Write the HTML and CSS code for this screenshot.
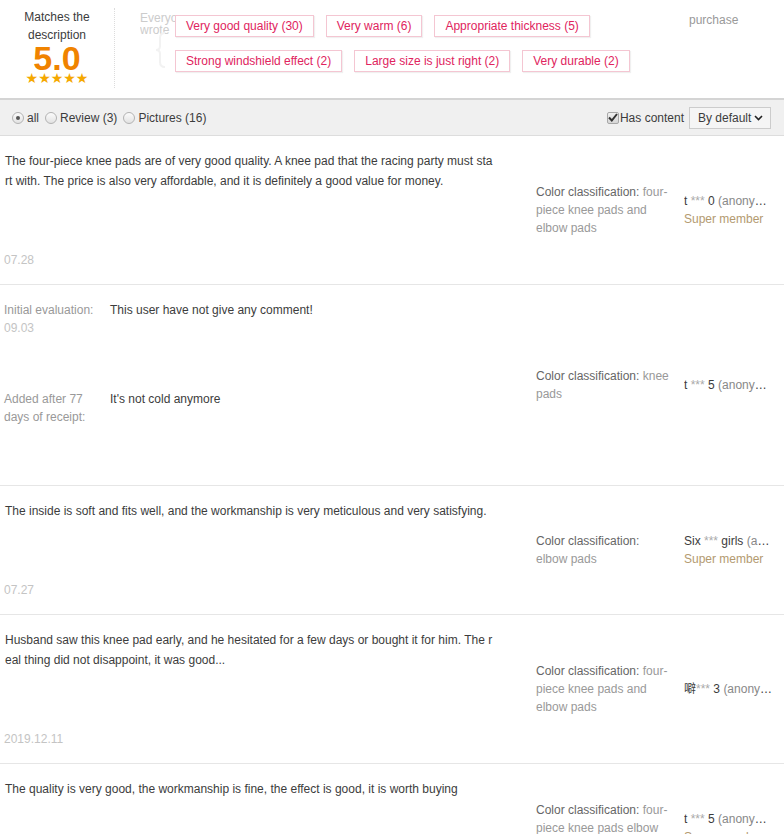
FILE: index.html
```html
<!DOCTYPE html>
<html lang="en">
<head>
<meta charset="utf-8">
<title>Reviews</title>
<link rel="stylesheet" href="styles.css">
</head>
<body>
<div class="summary">
  <div class="score">
    <div class="score-label">Matches the description</div>
    <div class="score-num">5.0</div>
    <div class="stars">★★★★★</div>
  </div>
  <div class="words">
    <div class="words-side">
      <div class="words-label">Everyone wrote</div>
      <svg class="brace" width="12" height="36" viewBox="0 0 12 36"><path d="M11 1 Q6 1 6 6 L6 14 Q6 18 2 18 Q6 18 6 22 L6 30 Q6 35 11 35" fill="none" stroke="#f2f2f2" stroke-width="2"/></svg>
    </div>
    <div class="tags">
      <span class="tag">Very good quality (30)</span>
      <span class="tag">Very warm (6)</span>
      <span class="tag">Appropriate thickness (5)</span>
      <span class="tag">Strong windshield effect (2)</span>
      <span class="tag">Large size is just right (2)</span>
      <span class="tag">Very durable (2)</span>
    </div>
  </div>
  <div class="purchase">purchase</div>
</div>

<div class="filter">
  <label class="opt"><span class="radio on"></span>all</label>
  <label class="opt"><span class="radio"></span>Review (3)</label>
  <label class="opt"><span class="radio"></span>Pictures (16)</label>
  <div class="filter-right">
    <span class="check"><svg width="10" height="9" viewBox="0 0 10 9"><path d="M1 4.5 L3.8 7.5 L9 1" fill="none" stroke="#333" stroke-width="2"/></svg></span>
    <span class="check-label">Has content</span>
    <div class="select">By default<svg class="chev" width="9" height="6" viewBox="0 0 9 6"><path d="M1 1 L4.5 4.5 L8 1" fill="none" stroke="#222" stroke-width="1.6"/></svg></div>
  </div>
</div>

<div class="review">
  <div class="main">
    <div class="text">The four-piece knee pads are of very good quality. A knee pad that the racing party must start with. The price is also very affordable, and it is definitely a good value for money.</div>
    <div class="date">07.28</div>
  </div>
  <div class="sku"><span class="sku-key">Color classification:</span> four-piece knee pads and elbow pads</div>
  <div class="user">
    <div class="nick">t <span class="mask">***</span> 0 <span class="anon">(anonymous)</span></div>
    <div class="member">Super member</div>
  </div>
</div>

<div class="review">
  <div class="main">
    <div class="append first">
      <div class="append-label">Initial evaluation:<div class="date-s">09.03</div></div>
      <div class="append-text">This user have not give any comment!</div>
    </div>
    <div class="append second">
      <div class="append-label">Added after 77 days of receipt:</div>
      <div class="append-text">It's not cold anymore</div>
    </div>
  </div>
  <div class="sku"><span class="sku-key">Color classification:</span> knee pads</div>
  <div class="user">
    <div class="nick">t <span class="mask">***</span> 5 <span class="anon">(anonymous)</span></div>
  </div>
</div>

<div class="review">
  <div class="main">
    <div class="text">The inside is soft and fits well, and the workmanship is very meticulous and very satisfying.</div>
    <div class="date">07.27</div>
  </div>
  <div class="sku"><span class="sku-key">Color classification:</span> elbow pads</div>
  <div class="user">
    <div class="nick">Six <span class="mask">***</span> girls <span class="anon">(anonymous)</span></div>
    <div class="member">Super member</div>
  </div>
</div>

<div class="review">
  <div class="main">
    <div class="text">Husband saw this knee pad early, and he hesitated for a few days or bought it for him. The real thing did not disappoint, it was good...</div>
    <div class="date">2019.12.11</div>
  </div>
  <div class="sku"><span class="sku-key">Color classification:</span> four-piece knee pads and elbow pads</div>
  <div class="user">
    <div class="nick">噼<span class="mask">***</span> 3 <span class="anon">(anonymous)</span></div>
  </div>
</div>

<div class="review">
  <div class="main">
    <div class="text">The quality is very good, the workmanship is fine, the effect is good, it is worth buying</div>
    <div class="date">07.25</div>
  </div>
  <div class="sku"><span class="sku-key">Color classification:</span> four-piece knee pads elbow pads</div>
  <div class="user">
    <div class="nick">t <span class="mask">***</span> 5 <span class="anon">(anonymous)</span></div>
    <div class="member">Super member</div>
  </div>
</div>
</body>
</html>
```

FILE: styles.css
```css
* { box-sizing: border-box; }

body {
  margin: 0;
  width: 784px;
  overflow: hidden;
  background: #fff;
  color: #3c3c3c;
  font-family: "Liberation Sans", Arial, "Noto Sans CJK SC", sans-serif;
  font-size: 12px;
}

/* ---------- summary ---------- */
.summary {
  display: flex;
  height: 100px;
  border-bottom: 2px solid #d4d4d4;
}

.score {
  width: 115px;
  height: 80px;
  margin-top: 8px;
  border-right: 1px dotted #dcdcdc;
  text-align: center;
  flex: none;
}

.score-label {
  line-height: 18px;
  padding: 0 16px;
}

.score-num {
  font-size: 34px;
  font-weight: bold;
  line-height: 28px;
  color: #f08300;
}

.stars {
  font-family: "DejaVu Sans", sans-serif;
  font-size: 14px;
  line-height: 12px;
  color: #f5a800;
}

.words {
  display: flex;
  margin-left: 25px;
}

.words-side {
  width: 35px;
  flex: none;
  overflow: hidden;
}

.words-label {
  margin-top: 12px;
  line-height: 12px;
  color: #cccccc;
}

.brace {
  display: block;
  margin: -4px 0 0 14px;
}

.tags {
  display: flex;
  flex-wrap: wrap;
  align-content: flex-start;
  gap: 13px 12px;
  width: 470px;
  margin-top: 15px;
}

.tag {
  height: 22px;
  line-height: 20px;
  padding: 0 10px;
  border: 1px solid #f4c6d2;
  color: #e0245e;
  background: #fff;
  box-shadow: 1px 1px 1px rgba(0, 0, 0, 0.06);
  white-space: nowrap;
}

.purchase {
  margin-left: auto;
  width: 95px;
  padding-top: 11px;
  line-height: 18px;
  color: #999;
}

/* ---------- filter bar ---------- */
.filter {
  display: flex;
  align-items: center;
  height: 36px;
  padding: 0 13px 0 12px;
  background: #f0f0f0;
  border-bottom: 1px solid #dddddd;
}

.opt {
  display: flex;
  align-items: center;
  margin-right: 6px;
  color: #3c3c3c;
}

.radio {
  width: 12px;
  height: 12px;
  margin-right: 3px;
  border: 1px solid #b3b3b3;
  border-radius: 50%;
  background: linear-gradient(#fbfbfb, #e2e2e2);
  display: flex;
  align-items: center;
  justify-content: center;
}

.radio.on::after {
  content: "";
  width: 4px;
  height: 4px;
  border-radius: 50%;
  background: #555;
}

.filter-right {
  margin-left: auto;
  display: flex;
  align-items: center;
}

.check {
  width: 12px;
  height: 12px;
  border: 1px solid #a8a8a8;
  border-radius: 2px;
  background: linear-gradient(#f0f0f0, #d6d6d6);
  display: flex;
  align-items: center;
  justify-content: center;
  margin-right: 1px;
}

.select {
  display: flex;
  align-items: center;
  width: 82px;
  height: 22px;
  margin-left: 5px;
  padding: 0 6px 0 8px;
  border: 1px solid #cccccc;
  background: #f5f5f5;
}

.chev {
  margin-left: 3px;
}

/* ---------- reviews ---------- */
.review {
  display: grid;
  grid-template-columns: 536px 148px 1fr;
  align-items: center;
  border-bottom: 1px solid #e6e6e6;
}

.main {
  align-self: start;
  padding: 15px 0 15px 4px;
}

.text {
  width: 492px;
  padding-left: 1px;
  line-height: 20px;
  word-break: break-all;
}

.date {
  margin-top: 60px;
  line-height: 18px;
  color: #c4c4c4;
}

.append {
  display: flex;
  line-height: 18px;
}

.append.first {
  padding-top: 1px;
}

.append.second {
  margin-top: 53px;
  margin-bottom: 44px;
}

.append-label {
  width: 100px;
  margin-right: 6px;
  flex: none;
  color: #999;
}

.date-s {
  color: #c4c4c4;
}

.sku {
  padding-right: 14px;
  line-height: 18px;
  color: #999;
}

.sku-key {
  color: #666;
}

.user {
  width: 90px;
  line-height: 18px;
}

.nick {
  white-space: nowrap;
  overflow: hidden;
  text-overflow: ellipsis;
  color: #3c3c3c;
}

.mask {
  color: #aaaaaa;
}

.anon {
  color: #888;
}

.member {
  color: #b39a70;
}
```
